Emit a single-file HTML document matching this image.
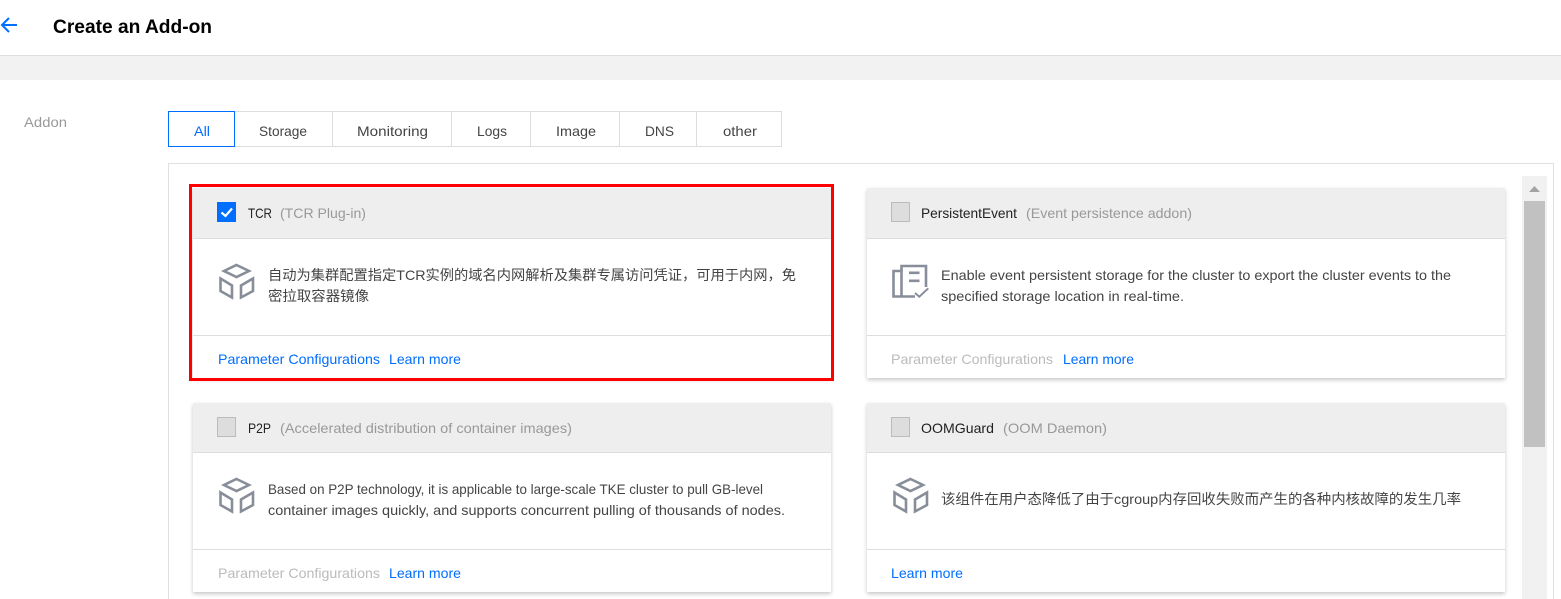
<!DOCTYPE html>
<html lang="en">
<head>
<meta charset="utf-8">
<title>Create an Add-on</title>
<style>
html,body{margin:0;padding:0;background:#fff;width:1561px;height:599px;overflow:hidden}
body{position:relative;font-family:"Liberation Sans","Noto Sans CJK SC",sans-serif}
.a{position:absolute;box-sizing:border-box}
.card{background:#fff;box-shadow:0 2px 4px rgba(0,0,0,.22);width:638px}
.hd{left:0;top:0;width:100%;height:51px;background:#eee;border-bottom:1px solid #ddd}
.ft{left:0;width:100%;height:1px;background:#ddd}
.cb{width:19px;height:20px;background:#ddd;border:1px solid #bbb}
.tab{top:111px;height:36px;border:1px solid #ddd;border-left:0}
svg{position:absolute;left:0;top:0}
text{font-family:"Liberation Sans","Noto Sans CJK SC",sans-serif;font-size:14px;fill:#444}
.g{fill:#999}.d{fill:#222}.b{fill:#006eff}.l{fill:#bbb}
.i{fill:none;stroke:#888e99;stroke-width:2.6}
</style>
</head>
<body>
<div class="a" style="left:0;top:55px;width:1561px;height:25px;background:#f2f2f2;border-top:1px solid #ddd"></div>

<div class="a tab" style="left:235px;width:98px"></div>
<div class="a tab" style="left:333px;width:119px"></div>
<div class="a tab" style="left:452px;width:79px"></div>
<div class="a tab" style="left:531px;width:89px"></div>
<div class="a tab" style="left:620px;width:77px"></div>
<div class="a tab" style="left:697px;width:85px"></div>
<div class="a tab" style="left:168px;width:67px;border:1px solid #006eff"></div>

<div class="a" style="left:168px;top:163px;width:1386px;height:440px;border:1px solid #e0e0e0"></div>

<div class="a card" style="left:193px;top:188px;height:190px"><div class="a hd"></div><div class="a ft" style="top:147px"></div></div>
<div class="a card" style="left:867px;top:188px;height:190px"><div class="a hd"></div><div class="a ft" style="top:147px"></div></div>
<div class="a card" style="left:193px;top:403px;height:189px"><div class="a hd" style="height:50px"></div><div class="a ft" style="top:146px"></div></div>
<div class="a card" style="left:867px;top:403px;height:189px"><div class="a hd" style="height:50px"></div><div class="a ft" style="top:146px"></div></div>

<div class="a" style="left:189px;top:184px;width:645px;height:197px;border:3px solid #f00"></div>

<div class="a" style="left:1522px;top:176px;width:25px;height:423px;background:#f1f1f1"></div>
<div class="a" style="left:1524px;top:201px;width:21px;height:246px;background:#c1c1c1"></div>

<div class="a cb" style="left:217px;top:202px;background:#006eff;border-color:#006eff"></div>
<div class="a cb" style="left:891px;top:202px"></div>
<div class="a cb" style="left:217px;top:417px"></div>
<div class="a cb" style="left:891px;top:417px"></div>

<svg width="1561" height="599" viewBox="0 0 1561 599" xmlns="http://www.w3.org/2000/svg">
  <path d="M1529 192L1534.500 186L1540 192Z" fill="#a3a3a3"/>
  <path d="M221.500 212.500L225.500 216L232 208.500" fill="none" stroke="#fff" stroke-width="2.200"/>
  <path d="M17 25H2M9 18L2 25L9 32" fill="none" stroke="#006eff" stroke-width="2"/>

  <text x="53" y="33" textLength="159" lengthAdjust="spacingAndGlyphs" style="font-size:19px;font-weight:bold;fill:#000">Create an Add-on</text>
  <text x="24" y="127" textLength="43" lengthAdjust="spacingAndGlyphs" class="g">Addon</text>

  <text x="194" y="136" textLength="16" lengthAdjust="spacingAndGlyphs" class="b">All</text>
  <text x="259" y="136" textLength="48" lengthAdjust="spacingAndGlyphs">Storage</text>
  <text x="357" y="136" textLength="71" lengthAdjust="spacingAndGlyphs">Monitoring</text>
  <text x="477" y="136" textLength="30" lengthAdjust="spacingAndGlyphs">Logs</text>
  <text x="556" y="136" textLength="40" lengthAdjust="spacingAndGlyphs">Image</text>
  <text x="645" y="136" textLength="29" lengthAdjust="spacingAndGlyphs">DNS</text>
  <text x="723" y="136" textLength="34" lengthAdjust="spacingAndGlyphs">other</text>

  <!-- Card 1 -->
  <text x="248" y="218" textLength="24" lengthAdjust="spacingAndGlyphs" class="d">TCR</text>
  <text x="280" y="218" textLength="86" lengthAdjust="spacingAndGlyphs" class="g">(TCR Plug-in)</text>
  <g class="i">
    <path d="M236.500 265L249 271L236.500 277L224 271Z"/>
    <path d="M220.500 278.500L232 285.500V297.500L220.500 291Z"/>
    <path d="M253 278.500L241 285.500V297.500L253 291Z"/>
  </g>
  <text x="268" y="280" textLength="528" lengthAdjust="spacingAndGlyphs">自动为集群配置指定TCR实例的域名内网解析及集群专属访问凭证，可用于内网，免</text>
  <text x="268" y="301" textLength="101" lengthAdjust="spacingAndGlyphs">密拉取容器镜像</text>
  <text x="218" y="364" textLength="162" lengthAdjust="spacingAndGlyphs" class="b">Parameter Configurations</text>
  <text x="389" y="364" textLength="72" lengthAdjust="spacingAndGlyphs" class="b">Learn more</text>

  <!-- Card 2 -->
  <text x="921" y="218" textLength="96" lengthAdjust="spacingAndGlyphs" class="d">PersistentEvent</text>
  <text x="1026" y="218" textLength="166" lengthAdjust="spacingAndGlyphs" class="g">(Event persistence addon)</text>
  <g class="i">
    <path d="M901.500 296V271H893.500V296.500H915"/>
    <path d="M901.500 271V266H926V287"/>
    <path d="M909 272.800H919.500M909 280.800H919.500"/>
    <path d="M915 293L919.300 296.700L928.300 288.300" stroke-width="2"/>
  </g>
  <text x="941" y="280" textLength="510" lengthAdjust="spacingAndGlyphs">Enable event persistent storage for the cluster to export the cluster events to the</text>
  <text x="941" y="301" textLength="243" lengthAdjust="spacingAndGlyphs">specified storage location in real-time.</text>
  <text x="891" y="364" textLength="162" lengthAdjust="spacingAndGlyphs" class="l">Parameter Configurations</text>
  <text x="1063" y="364" textLength="71" lengthAdjust="spacingAndGlyphs" class="b">Learn more</text>

  <!-- Card 3 -->
  <text x="248" y="433" textLength="23" lengthAdjust="spacingAndGlyphs" class="d">P2P</text>
  <text x="280" y="433" textLength="292" lengthAdjust="spacingAndGlyphs" class="g">(Accelerated distribution of container images)</text>
  <g class="i" transform="translate(0,214)">
    <path d="M236.500 265L249 271L236.500 277L224 271Z"/>
    <path d="M220.500 278.500L232 285.500V297.500L220.500 291Z"/>
    <path d="M253 278.500L241 285.500V297.500L253 291Z"/>
  </g>
  <text x="268" y="494" textLength="495" lengthAdjust="spacingAndGlyphs">Based on P2P technology, it is applicable to large-scale TKE cluster to pull GB-level</text>
  <text x="268" y="515" textLength="517" lengthAdjust="spacingAndGlyphs">container images quickly, and supports concurrent pulling of thousands of nodes.</text>
  <text x="218" y="578" textLength="162" lengthAdjust="spacingAndGlyphs" class="l">Parameter Configurations</text>
  <text x="389" y="578" textLength="72" lengthAdjust="spacingAndGlyphs" class="b">Learn more</text>

  <!-- Card 4 -->
  <text x="921" y="433" textLength="73" lengthAdjust="spacingAndGlyphs" class="d">OOMGuard</text>
  <text x="1003" y="433" textLength="104" lengthAdjust="spacingAndGlyphs" class="g">(OOM Daemon)</text>
  <g class="i" transform="translate(674,214)">
    <path d="M236.500 265L249 271L236.500 277L224 271Z"/>
    <path d="M220.500 278.500L232 285.500V297.500L220.500 291Z"/>
    <path d="M253 278.500L241 285.500V297.500L253 291Z"/>
  </g>
  <text x="941" y="504" textLength="520" lengthAdjust="spacingAndGlyphs">该组件在用户态降低了由于cgroup内存回收失败而产生的各种内核故障的发生几率</text>
  <text x="891" y="578" textLength="72" lengthAdjust="spacingAndGlyphs" class="b">Learn more</text>
</svg>
</body>
</html>
